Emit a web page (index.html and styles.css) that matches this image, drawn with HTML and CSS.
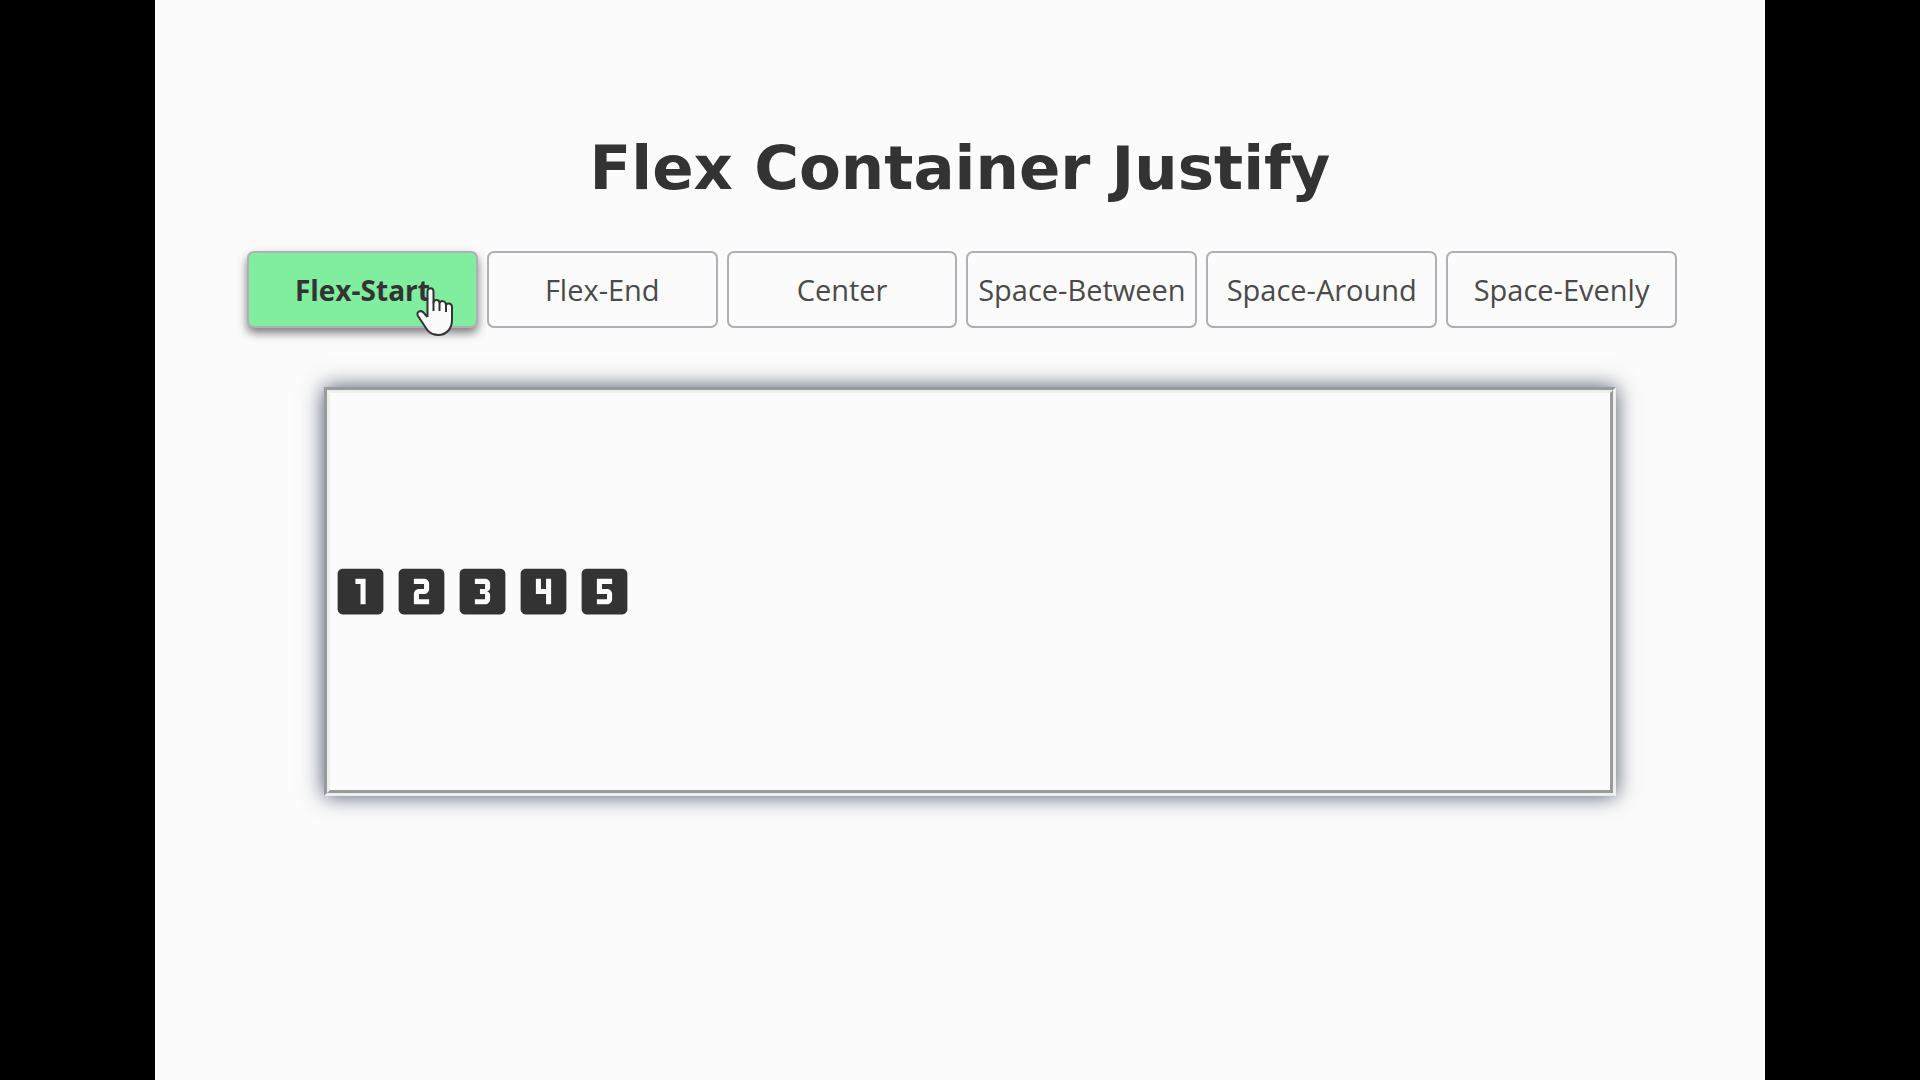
FILE: index.html
```html
<!DOCTYPE html>
<html lang="en">
<head>
    <meta charset="UTF-8">
    <meta name="viewport" content="width=device-width, initial-scale=1.0">
    <title>Flex Container Justify</title>
    <link rel="stylesheet" href="styles.css">
</head>
<body>

<main class="page">
    <h1>Flex Container Justify</h1>

    <div class="buttons">
        <button type="button" class="active" data-justify="flex-start">Flex-Start
            <svg class="pointer" viewBox="0 0 38 50" aria-hidden="true">
                <path d="M11.500 30V5c0-5 6-5 6 0v11c0-4 6-4 6 0v1c0-4 6.500-4 6.500 1v1c0-4 6-3 6 1v13c0 8-5 15-14 15-8 0-11-5-14-10L2 29c-2-4 2-6 5-4l4.500 5"/>
                <path class="fingers" d="M17.500 15v9M23.500 17v7M30 19v6"/>
            </svg>
        </button>
        <button type="button" data-justify="flex-end">Flex-End</button>
        <button type="button" data-justify="center">Center</button>
        <button type="button" data-justify="space-between">Space-Between</button>
        <button type="button" data-justify="space-around">Space-Around</button>
        <button type="button" data-justify="space-evenly">Space-Evenly</button>
    </div>

    <div class="container" id="container">
        <svg class="item" viewBox="0 0 24 24" role="img" aria-label="1"><path d="M19 3H5c-1.100 0-2 .9-2 2v14c0 1.100.9 2 2 2h14c1.100 0 2-.9 2-2V5c0-1.100-.9-2-2-2zm-5 14h-2V9h-2V7h4v10z"/></svg>
        <svg class="item" viewBox="0 0 24 24" role="img" aria-label="2"><path d="M19 3H5c-1.100 0-2 .9-2 2v14c0 1.100.9 2 2 2h14c1.100 0 2-.9 2-2V5c0-1.100-.9-2-2-2zm-4 8c0 1.110-.9 2-2 2h-2v2h4v2H9v-4c0-1.110.9-2 2-2h2V9H9V7h4c1.100 0 2 .89 2 2v2z"/></svg>
        <svg class="item" viewBox="0 0 24 24" role="img" aria-label="3"><path d="M19 3H5c-1.100 0-2 .9-2 2v14c0 1.100.9 2 2 2h14c1.100 0 2-.9 2-2V5c0-1.100-.9-2-2-2zm-4 7.500c0 .83-.67 1.500-1.500 1.500.83 0 1.500.67 1.500 1.500V15c0 1.110-.9 2-2 2H9v-2h4v-2h-2v-2h2V9H9V7h4c1.100 0 2 .89 2 2v1.500z"/></svg>
        <svg class="item" viewBox="0 0 24 24" role="img" aria-label="4"><path d="M19 3H5c-1.100 0-2 .9-2 2v14c0 1.100.9 2 2 2h14c1.100 0 2-.9 2-2V5c0-1.100-.9-2-2-2zm-4 14h-2v-4H9V7h2v4h2V7h2v10z"/></svg>
        <svg class="item" viewBox="0 0 24 24" role="img" aria-label="5"><path d="M19 3H5c-1.100 0-2 .9-2 2v14c0 1.100.9 2 2 2h14c1.100 0 2-.9 2-2V5c0-1.100-.9-2-2-2zm-4 6h-4v2h2c1.100 0 2 .89 2 2v2c0 1.110-.9 2-2 2H9v-2h4v-2H9V7h6v2z"/></svg>
    </div>
</main>

<script>
    var buttons = document.querySelectorAll(".buttons button");
    var container = document.getElementById("container");

    buttons.forEach(function (button) {
        button.onclick = function () {
            document.querySelector(".buttons .active").classList.remove("active");
            button.classList.add("active");
            container.style.justifyContent = button.dataset.justify;
        };
    });
</script>
</body>
</html>
```
FILE: styles.css
```css
* {
    box-sizing: border-box;
}
body {
    margin: 0;
    padding: 0 155px;
    background-color: #000;
    color: #333;
}
.page {
    min-height: 100vh;
    padding-top: 128px;
    background-color: #fbfbfb;
}
h1 {
    margin: 0 0 43px;
    font-family: Verdana, "DejaVu Sans", sans-serif;
    font-size: 61px;
    line-height: 80px;
    text-align: center;
}
.buttons {
    display: grid;
    grid-template-columns: repeat(6, 1fr);
    gap: 9px;
    margin: 0 88px 0 92px;
}
.buttons button {
    position: relative;
    height: 77px;
    padding: 0;
    border: 2px solid #aeb0b3;
    border-radius: 7px;
    background-color: #fbfbfb;
    color: #4a4a4a;
    font-family: "Open Sans", sans-serif;
    font-size: 29px;
    white-space: nowrap;
    cursor: pointer;
}
.buttons .active {
    background-color: #80ed9f;
    color: #333;
    font-size: 28px;
    font-weight: bold;
    box-shadow: 0 5px 10px rgba(0, 0, 0, 0.5);
}
/* Hand pointer lying over the first button */
.pointer {
    position: absolute;
    top: 34px;
    right: 22px;
    width: 38px;
    height: 50px;
    fill: #fbfbfb;
    stroke: #333;
    stroke-width: 2;
}
.pointer .fingers {
    fill: none;
}
.container {
    display: flex;
    justify-content: flex-start;
    align-items: center;
    height: 409px;
    margin: 59px 149px 0 169px;
    border: 6px groove #eee;
    box-shadow: 0 0 20px #4a5568;
}
.item {
    width: 61px;
    height: 61px;
    fill: #333;
}
```
